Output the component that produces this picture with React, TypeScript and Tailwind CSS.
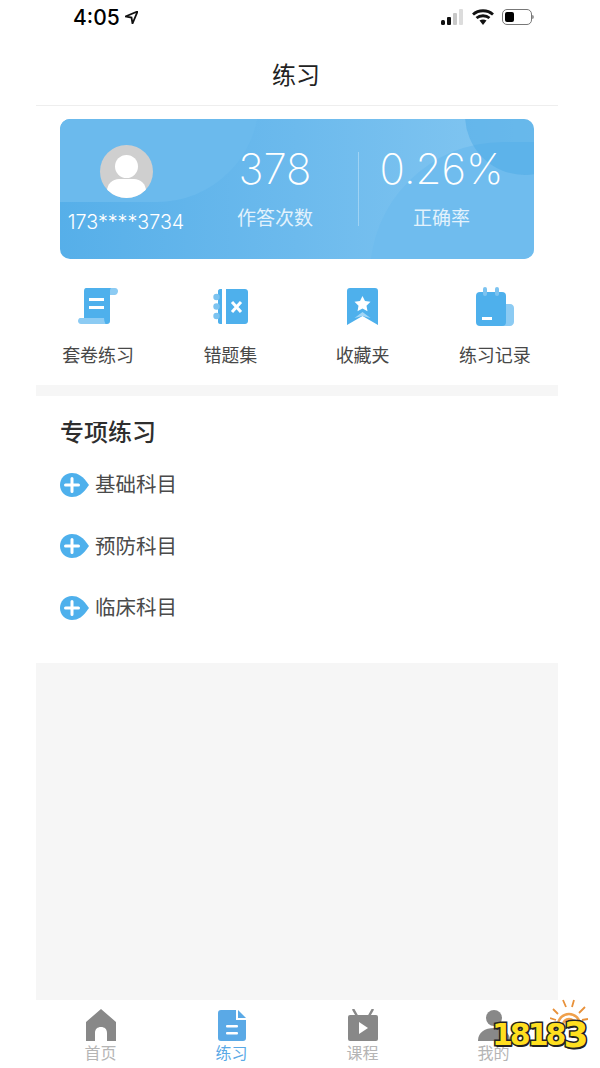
import React from "react";

const BLUE = "#4eb0ec";

const PlusIcon = () => (
  <svg className="mt-[3px]" width="30" height="24" viewBox="0 0 30 24">
    <path d="M12 0C5 0 0 5.400 0 12s5 12 12 12c6 0 11-3 17-12C23 3 18 0 12 0z" fill={BLUE} />
    <path d="M12 5.500v13M5.500 12h13" stroke="#fff" strokeWidth="3" strokeLinecap="round" />
  </svg>
);

const ScrollIcon = () => (
  <svg width="40" height="36" viewBox="0 0 40 36">
    <path d="M30 0h7c2 0 3 1.500 3 3s-1 4-3 4h-7z" fill="#8ccbf3" />
    <path d="M8 0h25c-1 1-1 2-1 4v29c0 2-1 3-3 3H6V3c0-2 1-3 2-3z" fill={BLUE} />
    <path d="M2 30h24c0 2 .500 4 1.500 6H3c-2 0-3-1.500-3-3s1-3 2-3z" fill="#8ccbf3" />
    <rect x="11" y="10" width="15" height="3" fill="#fff" />
    <rect x="11" y="18" width="15" height="3" fill="#fff" />
  </svg>
);

const NotebookIcon = () => (
  <svg width="35" height="35" viewBox="0 0 35 35">
    <path d="M9 0v35H7c-1 0-2-1-2-2V2c0-1 1-2 2-2z" fill={BLUE} />
    <circle cx="3.500" cy="8" r="3.200" fill="#7cc3f0" />
    <circle cx="3.500" cy="17.500" r="3.200" fill="#7cc3f0" />
    <circle cx="3.500" cy="27" r="3.200" fill="#7cc3f0" />
    <path d="M13 0h19c1.500 0 3 1 3 3v29c0 2-1.500 3-3 3H13z" fill={BLUE} />
    <path d="M19 13l9 10M28 13l-9 10" stroke="#fff" strokeWidth="3" />
  </svg>
);

const BookmarkIcon = () => (
  <svg width="31" height="37" viewBox="0 0 31 37">
    <path d="M3 0h25c2 0 3 1 3 3v34l-15.500-9L0 37V3c0-2 1-3 3-3z" fill={BLUE} />
    <path d="M15.500 24l-8 6 8-2 8 2z" fill="#a3d6f6" />
    <path d="M15.500 8l2.500 5 5.500.8-4 3.900 1 5.500-5-2.600-5 2.600 1-5.500-4-3.900 5.500-.8z" fill="#fff" />
  </svg>
);

const RecordIcon = () => (
  <svg width="38" height="39" viewBox="0 0 38 39">
    <path d="M26 17h8c2.500 0 4 2 4 4v14c0 2-2 4-4 4h-8z" fill="#8ccbf3" />
    <rect x="0" y="5" width="30" height="34" rx="4" fill={BLUE} />
    <rect x="7" y="0" width="4" height="9" rx="2" fill="#7cc3f0" />
    <rect x="19" y="0" width="4" height="9" rx="2" fill="#7cc3f0" />
    <rect x="6" y="30" width="10" height="3" fill="#fff" />
  </svg>
);

const HomeIcon = () => (
  <svg width="30" height="32" viewBox="0 0 30 32">
    <path d="M15 0l15 13v19H21V24c0-4-2.500-6-6-6s-6 2-6 6v8H0V13z" fill="#888" />
  </svg>
);

const DocIcon = () => (
  <svg width="28" height="31" viewBox="0 0 28 31">
    <path d="M3 0h15v10h10v18c0 2-1 3-3 3H3c-2 0-3-1-3-3V3c0-2 1-3 3-3z" fill="#5aa9e6" />
    <path d="M20 0l8 8h-8z" fill="#5aa9e6" />
    <rect x="8" y="15" width="12" height="2.500" rx="1" fill="#fff" />
    <rect x="8" y="22" width="12" height="2.500" rx="1" fill="#fff" />
  </svg>
);

const TvIcon = () => (
  <svg width="30" height="32" viewBox="0 0 30 32">
    <path d="M9 7L5 0M21 7l4-7" stroke="#888" strokeWidth="2.500" />
    <rect x="0" y="6" width="30" height="26" rx="2" fill="#888" />
    <path d="M11 13l9 6-9 6z" fill="#fff" />
  </svg>
);

const UserIcon = () => (
  <svg width="32" height="31" viewBox="0 0 32 31">
    <circle cx="16" cy="8" r="8" fill="#888" />
    <path d="M0 31c0-9 7-13 16-13s16 4 16 13z" fill="#888" />
  </svg>
);

const shortcuts = [
  { label: "套卷练习", icon: <ScrollIcon /> },
  { label: "错题集", icon: <NotebookIcon /> },
  { label: "收藏夹", icon: <BookmarkIcon /> },
  { label: "练习记录", icon: <RecordIcon /> },
];

const subjects = ["基础科目", "预防科目", "临床科目"];

const tabs = [
  { label: "首页", icon: <HomeIcon />, active: false },
  { label: "练习", icon: <DocIcon />, active: true },
  { label: "课程", icon: <TvIcon />, active: false },
  { label: "我的", icon: <UserIcon />, active: false },
];

const StatusBar = () => (
  <div className="h-[34px] flex items-center justify-between pl-[73px] pr-[66px] text-black">
    <div className="flex items-center gap-[5px] font-['Inter',sans-serif] text-[21px] font-medium leading-none">
      4:05
      <svg width="13" height="13" viewBox="0 0 13 13">
        <path d="M12.500.500L.500 5.500l6 1 1 6z" fill="none" stroke="#111" strokeWidth="1.800" />
      </svg>
    </div>
    <div className="flex items-center gap-[8px]">
      <svg width="23" height="16" viewBox="0 0 23 16">
        <rect x="0" y="11" width="4" height="5" rx="1.500" fill="#111" />
        <rect x="6" y="8" width="4" height="8" rx="1" fill="#111" />
        <rect x="12" y="4" width="4" height="12" rx="1" fill="#c8c8c8" />
        <rect x="18" y="0" width="4" height="16" rx="1" fill="#dcdcdc" />
      </svg>
      <svg width="22" height="16" viewBox="0 0 22 16">
        <path d="M1 5.500C6.500.5 15.500.5 21 5.500M4.500 9c3.500-3 9.500-3 13 0" fill="none" stroke="#111" strokeWidth="2.800" />
        <path d="M7.500 11.500c2-1.500 5-1.500 7 0L11 16z" fill="#111" />
      </svg>
      <div className="flex items-center">
        <div className="w-[30px] h-[16px] rounded-[5px] border border-[#777] p-[2px] flex">
          <div className="w-[9px] rounded-[2px] bg-black" />
        </div>
        <div className="w-[2px] h-[4px] bg-[#999] rounded-r-sm" />
      </div>
    </div>
  </div>
);

const ProfileCard = () => (
  <div className="relative ml-[60px] w-[474px] mt-[13px] h-[140px] rounded-[10px] overflow-hidden bg-gradient-to-r from-[#56afe9] via-[#6cbaed] to-[#84c7f1] text-white flex items-center">
    <div className="absolute -left-[199px] -top-[121px] w-[398px] h-[204px] rounded-full bg-[#6bbaed]" />
    <div className="absolute left-[310px] top-[23px] w-[320px] h-[266px] rounded-full bg-[#6fbcee]" />
    <div className="absolute left-[405px] -top-[64px] w-[120px] h-[120px] rounded-full bg-[#4ba9e6]/50" />

    <div className="relative w-[132px] flex flex-col items-center pt-[1px]">
      <div className="relative w-[53px] h-[53px] rounded-full bg-[#cfcfcf] overflow-hidden">
        <div className="absolute left-[15px] top-[10px] w-[23px] h-[23px] rounded-full bg-white" />
        <div className="absolute left-[7px] top-[34px] w-[39px] h-[24px] rounded-full bg-white" />
      </div>
      <div className="mt-[11px] font-['Inter',sans-serif] text-[19.700px] leading-[26px] font-light whitespace-nowrap">173****3734</div>
    </div>
    <div className="relative w-[166px] flex flex-col items-center pb-[4px]">
      <div className="font-['Inter',sans-serif] text-[42px] font-extralight leading-[46px]">378</div>
      <div className="mt-[13px] text-[19px] leading-[24px] text-[#e3f2fc]">作答次数</div>
    </div>
    <div className="relative w-px h-[74px] bg-[#9fd3f4]" />
    <div className="relative flex-1 flex flex-col items-center pr-[10px] pb-[4px]">
      <div className="font-['Inter',sans-serif] text-[42px] font-extralight leading-[46px]">0.26%</div>
      <div className="mt-[13px] text-[19px] leading-[24px] text-[#e3f2fc]">正确率</div>
    </div>
  </div>
);

export default function App() {
  return (
    <div className="relative w-[600px] h-[1068px] overflow-hidden bg-white flex flex-col font-['Noto_Sans_CJK_SC','Liberation_Sans',sans-serif] text-[#444]">
      <StatusBar />

      <div className="ml-[36px] w-[522px] h-[72px] pt-[8px] border-b border-[#eeeeee] flex items-center justify-center">
        <span className="mr-[2px] text-[24px] leading-none text-[#222]">练习</span>
      </div>

      <ProfileCard />

      <div className="ml-[32px] w-[529px] mt-[27px] grid grid-cols-4">
        {shortcuts.map((s) => (
          <div key={s.label} className="flex flex-col items-center">
            <div className="h-[40px] flex items-center justify-center">{s.icon}</div>
            <span className="mt-[16px] mb-[1px] text-[18px] leading-[24px] text-[#484848]">{s.label}</span>
          </div>
        ))}
      </div>

      <div className="ml-[36px] w-[522px] mt-[18px] h-[11px] bg-[#f6f6f6]" />

      <div className="ml-[36px] w-[522px] pl-[24px] h-[267px]">
        <div className="pt-[19px] text-[24px] leading-[32px] font-medium text-[#2e2e2e]">专项练习</div>
        <div className="mt-[20px] flex flex-col gap-[29.500px]">
          {subjects.map((s) => (
            <div key={s} className="flex items-center gap-[5px] h-[32px]">
              <PlusIcon />
              <span className="text-[20.500px] leading-[32px] text-[#4a4a4a]">{s}</span>
            </div>
          ))}
        </div>
      </div>

      <div className="ml-[36px] w-[522px] h-[337px] bg-[#f6f6f6]" />

      <div className="ml-[35px] w-[524px] grid grid-cols-4 pt-[9px]">
        {tabs.map((t) => (
          <div key={t.label} className="flex flex-col items-center">
            <div className="h-[32px] flex items-center justify-center">{t.icon}</div>
            <span className={`text-[16px] leading-[20px] mt-[1px] ${t.active ? "text-[#5aa9e6]" : "text-[#b5b5b5]"}`}>
              {t.label}
            </span>
          </div>
        ))}
      </div>

      {/* 18183 watermark */}
      <div className="absolute left-[490px] top-[998px] w-[106px] h-[60px]">
        <svg className="absolute left-[60px] top-[1px]" width="38" height="26" viewBox="0 0 38 26">
          <path d="M8 26a11 11 0 0 1 22 0" fill="none" stroke="#f0a04b" strokeWidth="2.500" />
          <path d="M13 26a6 6 0 0 1 12 0" fill="none" stroke="#f0a04b" strokeWidth="2.500" />
          <path d="M3 10l5 5M13 1l3 7M24 1l-2 7M35 8l-6 6M0 19l6 2M38 20l-6 1" stroke="#e8913a" strokeWidth="1.800" />
        </svg>
        <div className="absolute left-[2px] top-[23px] flex items-end font-['DejaVu_Sans',sans-serif] text-[30px] leading-[28px] font-bold tracking-[-3px] text-[#ffdf1f] [-webkit-text-stroke:3px_#222] [paint-order:stroke_fill] [text-shadow:1px_2px_0_#222]">
          1818<span className="text-[36px] leading-[28px]">3</span>
        </div>
      </div>
    </div>
  );
}
